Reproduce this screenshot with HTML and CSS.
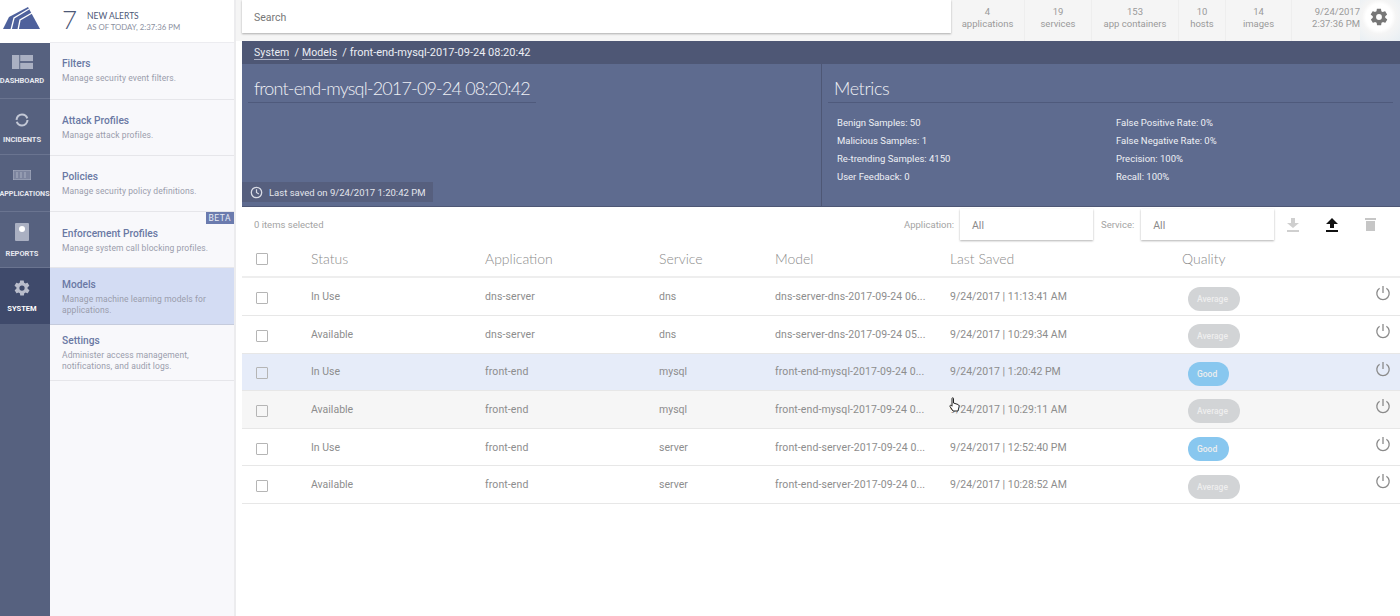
FILE: index.html
```html
<!DOCTYPE html>
<html lang="en">
<head>
    <meta charset="UTF-8">
    <title>Models</title>
    <link rel="stylesheet" href="styles.css">
</head>
<body>
    <div class="app">
        <aside class="rail">
            <div class="logo">
                <svg width="40" height="24" viewBox="0 0 40 24"><path d="M1 22 L7 10 L26 0 L38 22 Z" fill="#4e619c"/><path d="M9 23 L12 11 L27 2 M16 23 L18 13 L30 6" fill="none" stroke="#fff" stroke-width="1.3"/></svg>
            </div>
            <a class="rail-item rail-dash">
                <svg width="21" height="14" viewBox="0 0 23 16" preserveAspectRatio="none"><rect width="8" height="16" fill="#aab0c2"/><rect x="9" width="14" height="7" fill="#aab0c2"/><rect x="9" y="9" width="14" height="7" fill="#aab0c2"/></svg>
                <span>DASHBOARD</span>
            </a>
            <a class="rail-item rail-inc">
                <svg width="18" height="18" viewBox="0 0 18 18"><circle cx="9" cy="9" r="5.5" fill="none" stroke="#c3c8d6" stroke-width="2" stroke-dasharray="15 2"/></svg>
                <span>INCIDENTS</span>
            </a>
            <a class="rail-item rail-app">
                <svg width="18" height="10" viewBox="0 0 18 10"><path d="M0 0H18V10H0Z M4 2V8 M8 2V8 M12 2V8" fill="#7d859f" stroke="#aab0c2"/></svg>
                <span>APPLICATIONS</span>
            </a>
            <a class="rail-item rail-rep">
                <svg width="14" height="18" viewBox="0 0 14 18"><rect width="14" height="18" rx="1" fill="#aab0c2"/><circle cx="7" cy="6" r="3" fill="#fff"/></svg>
                <span>REPORTS</span>
            </a>
            <a class="rail-item rail-sys">
                <svg width="18" height="18" viewBox="0 0 24 24"><path fill="#b9bdcb" d="M19.4 13c0-.3.1-.6.1-1s0-.7-.1-1l2.1-1.6c.2-.2.2-.4.1-.6l-2-3.5c-.1-.2-.4-.3-.6-.2l-2.5 1c-.5-.4-1.1-.7-1.7-1l-.4-2.6c0-.3-.2-.5-.5-.5h-4c-.3 0-.5.2-.5.4l-.4 2.7c-.6.2-1.1.6-1.7 1l-2.5-1c-.2-.1-.5 0-.6.2l-2 3.5c-.1.2-.1.5.1.6L4.6 11c0 .3-.1.6-.1 1s0 .7.1 1l-2.1 1.6c-.2.2-.2.4-.1.6l2 3.5c.1.2.4.3.6.2l2.5-1c.5.4 1.1.7 1.7 1l.4 2.6c0 .3.2.5.5.5h4c.3 0 .5-.2.5-.4l.4-2.7c.6-.2 1.1-.6 1.7-1l2.5 1c.2.1.5 0 .6-.2l2-3.5c.1-.2.1-.5-.1-.6L19.4 13zM12 15.5a3.5 3.5 0 1 1 0-7 3.5 3.5 0 0 1 0 7z"/></svg>
                <span>SYSTEM</span>
            </a>
        </aside>

        <nav class="subnav">
            <div class="alerts">
                <span class="alerts-count">7</span>
                <div class="alerts-text">
                    <div class="alerts-title">NEW ALERTS</div>
                    <div class="alerts-time">AS OF TODAY, 2:37:36 PM</div>
                </div>
            </div>
            <a class="subnav-item h57"><b>Filters</b><p>Manage security event filters.</p></a>
            <a class="subnav-item h56"><b>Attack Profiles</b><p>Manage attack profiles.</p></a>
            <a class="subnav-item h56"><b>Policies</b><p>Manage security policy definitions.</p></a>
            <a class="subnav-item h56 has-beta"><span class="beta">BETA</span><b>Enforcement Profiles</b><p>Manage system call blocking profiles.</p></a>
            <a class="subnav-item h57 active"><b>Models</b><p>Manage machine learning models for applications.</p></a>
            <a class="subnav-item h56 tall"><b>Settings</b><p>Administer access management, notifications, and audit logs.</p></a>
        </nav>

        <main class="content">
            <header class="topbar">
                <div class="search">Search</div>
                <div class="stat w1"><span>4</span><span>applications</span></div>
                <div class="stat w2"><span>19</span><span>services</span></div>
                <div class="stat w3"><span>153</span><span>app containers</span></div>
                <div class="stat w4"><span>10</span><span>hosts</span></div>
                <div class="stat w5"><span>14</span><span>images</span></div>
                <div class="stat w6"><span>9/24/2017</span><span>2:37:36 PM</span></div>
                <div class="settings">
                    <svg width="20" height="20" viewBox="0 0 24 24"><path fill="#777" d="M19.4 13c0-.3.1-.6.1-1s0-.7-.1-1l2.1-1.6c.2-.2.2-.4.1-.6l-2-3.5c-.1-.2-.4-.3-.6-.2l-2.5 1c-.5-.4-1.1-.7-1.7-1l-.4-2.6c0-.3-.2-.5-.5-.5h-4c-.3 0-.5.2-.5.4l-.4 2.7c-.6.2-1.1.6-1.7 1l-2.5-1c-.2-.1-.5 0-.6.2l-2 3.5c-.1.2-.1.5.1.6L4.6 11c0 .3-.1.6-.1 1s0 .7.1 1l-2.1 1.6c-.2.2-.2.4-.1.6l2 3.5c.1.2.4.3.6.2l2.5-1c.5.4 1.1.7 1.7 1l.4 2.6c0 .3.2.5.5.5h4c.3 0 .5-.2.5-.4l.4-2.7c.6-.2 1.1-.6 1.7-1l2.5 1c.2.1.5 0 .6-.2l2-3.5c.1-.2.1-.5-.1-.6L19.4 13zM12 15.5a3.5 3.5 0 1 1 0-7 3.5 3.5 0 0 1 0 7z"/></svg>
                </div>
            </header>

            <div class="crumbs">
                <a>System</a><span class="sep">/</span><a>Models</a><span class="sep">/</span><span>front-end-mysql-2017-09-24 08:20:42</span>
            </div>

            <section class="hero">
                <div class="hero-left">
                    <h1>front-end-mysql-2017-09-24 08:20:42</h1>
                    <div class="saved">
                        <svg width="13" height="13" viewBox="0 0 14 14"><circle cx="7" cy="7" r="5.6" fill="none" stroke="#d8dbe5" stroke-width="1.4"/><path d="M7 3.5V7L9.5 8.5" fill="none" stroke="#d8dbe5" stroke-width="1.3"/></svg>
                        <span>Last saved on 9/24/2017 1:20:42 PM</span>
                    </div>
                </div>
                <div class="hero-right">
                    <h2>Metrics</h2>
                    <div class="metrics">
                        <div class="metric-col col-a">
                            <p>Benign Samples: 50</p>
                            <p>Malicious Samples: 1</p>
                            <p>Re-trending Samples: 4150</p>
                            <p>User Feedback: 0</p>
                        </div>
                        <div class="metric-col">
                            <p>False Positive Rate: 0%</p>
                            <p>False Negative Rate: 0%</p>
                            <p>Precision: 100%</p>
                            <p>Recall: 100%</p>
                        </div>
                    </div>
                </div>
            </section>

            <div class="toolbar">
                <span class="selected">0 items selected</span>
                <span class="filter-label">Application:</span>
                <div class="select sel-a">All</div>
                <span class="filter-label">Service:</span>
                <div class="select sel-b">All</div>
                <div class="actions">
                    <svg width="12" height="14" viewBox="0 0 12 14"><path d="M4 0H8V5H12L6 10L0 5H4Z M0 12H12V14H0Z" fill="#cfcfcf"/></svg>
                    <svg width="12" height="14" viewBox="0 0 12 14"><path d="M6 0L12 6H8V10H4V6H0Z M0 12H12V14H0Z" fill="#111"/></svg>
                    <svg width="11" height="13" viewBox="0 0 11 13"><path d="M0 0H11V2H0Z M1 3H10V13H1Z" fill="#c6c6c6"/></svg>
                </div>
            </div>

            <div class="table">
                <div class="row head">
                    <div class="c-check"><i class="box"></i></div>
                    <div class="c-status">Status</div>
                    <div class="c-app">Application</div>
                    <div class="c-svc">Service</div>
                    <div class="c-model">Model</div>
                    <div class="c-saved">Last Saved</div>
                    <div class="c-qual">Quality</div>
                </div>
                <div class="row">
                    <div class="c-check"><i class="box"></i></div>
                    <div class="c-status">In Use</div>
                    <div class="c-app">dns-server</div>
                    <div class="c-svc">dns</div>
                    <div class="c-model">dns-server-dns-2017-09-24 06...</div>
                    <div class="c-saved">9/24/2017 | 11:13:41 AM</div>
                    <div class="c-qual"><span class="pill average">Average</span></div>
                    <svg class="power" width="16" height="16" viewBox="0 0 16 16"><path d="M8 1V8 M4.6 3.2A6.2 6.2 0 1 0 11.4 3.2" fill="none" stroke="#8a8a8a" stroke-width="1.3"/></svg>
                </div>
                <div class="row">
                    <div class="c-check"><i class="box"></i></div>
                    <div class="c-status">Available</div>
                    <div class="c-app">dns-server</div>
                    <div class="c-svc">dns</div>
                    <div class="c-model">dns-server-dns-2017-09-24 05...</div>
                    <div class="c-saved">9/24/2017 | 10:29:34 AM</div>
                    <div class="c-qual"><span class="pill average">Average</span></div>
                    <svg class="power" width="16" height="16" viewBox="0 0 16 16"><path d="M8 1V8 M4.6 3.2A6.2 6.2 0 1 0 11.4 3.2" fill="none" stroke="#8a8a8a" stroke-width="1.3"/></svg>
                </div>
                <div class="row current">
                    <div class="c-check"><i class="box"></i></div>
                    <div class="c-status">In Use</div>
                    <div class="c-app">front-end</div>
                    <div class="c-svc">mysql</div>
                    <div class="c-model">front-end-mysql-2017-09-24 0...</div>
                    <div class="c-saved">9/24/2017 | 1:20:42 PM</div>
                    <div class="c-qual"><span class="pill good">Good</span></div>
                    <svg class="power" width="16" height="16" viewBox="0 0 16 16"><path d="M8 1V8 M4.6 3.2A6.2 6.2 0 1 0 11.4 3.2" fill="none" stroke="#8a8a8a" stroke-width="1.3"/></svg>
                </div>
                <div class="row hover">
                    <div class="c-check"><i class="box"></i></div>
                    <div class="c-status">Available</div>
                    <div class="c-app">front-end</div>
                    <div class="c-svc">mysql</div>
                    <div class="c-model">front-end-mysql-2017-09-24 0...</div>
                    <div class="c-saved">9/24/2017 | 10:29:11 AM</div>
                    <div class="c-qual"><span class="pill average">Average</span></div>
                    <svg class="power" width="16" height="16" viewBox="0 0 16 16"><path d="M8 1V8 M4.6 3.2A6.2 6.2 0 1 0 11.4 3.2" fill="none" stroke="#8a8a8a" stroke-width="1.3"/></svg>
                    <svg class="cursor" width="11" height="15" viewBox="0 0 11 15"><path d="M3 1.5C3 .5 4.5 .5 4.5 1.5V6L9 7.5C10 8 10.2 9 10 10L9 14H4L1 9.5C.6 8.5 1.6 7.8 2.4 8.5L3 9.2Z" fill="#fff" stroke="#222" stroke-width="1"/></svg>
                </div>
                <div class="row">
                    <div class="c-check"><i class="box"></i></div>
                    <div class="c-status">In Use</div>
                    <div class="c-app">front-end</div>
                    <div class="c-svc">server</div>
                    <div class="c-model">front-end-server-2017-09-24 0...</div>
                    <div class="c-saved">9/24/2017 | 12:52:40 PM</div>
                    <div class="c-qual"><span class="pill good">Good</span></div>
                    <svg class="power" width="16" height="16" viewBox="0 0 16 16"><path d="M8 1V8 M4.6 3.2A6.2 6.2 0 1 0 11.4 3.2" fill="none" stroke="#8a8a8a" stroke-width="1.3"/></svg>
                </div>
                <div class="row">
                    <div class="c-check"><i class="box"></i></div>
                    <div class="c-status">Available</div>
                    <div class="c-app">front-end</div>
                    <div class="c-svc">server</div>
                    <div class="c-model">front-end-server-2017-09-24 0...</div>
                    <div class="c-saved">9/24/2017 | 10:28:52 AM</div>
                    <div class="c-qual"><span class="pill average">Average</span></div>
                    <svg class="power" width="16" height="16" viewBox="0 0 16 16"><path d="M8 1V8 M4.6 3.2A6.2 6.2 0 1 0 11.4 3.2" fill="none" stroke="#8a8a8a" stroke-width="1.3"/></svg>
                </div>
            </div>
        </main>
    </div>
</body>
</html>
```

FILE: styles.css
```css
* {
    box-sizing: border-box;
}
body {
    margin: 0;
    height: 616px;
    overflow: hidden;
    background-color: #fff;
    font-family: Roboto, "Liberation Sans", sans-serif;
}
p {
    margin: 0;
}
.app {
    display: flex;
    height: 616px;
}

/* left icon rail */
.rail {
    width: 50px;
    flex-shrink: 0;
    background-color: #56617f;
    overflow: hidden;
}
.logo {
    height: 43px;
    background-color: #fff;
    padding: 7px 0 0 2px;
}
.rail-item {
    display: flex;
    flex-direction: column;
    align-items: center;
    height: 56px;
    padding: 12px 6px 0 0;
    border-bottom: 1px solid #6a7490;
    white-space: nowrap;
}
.rail-item span {
    font-size: 7.5px;
    font-weight: 700;
    color: #e6e8ef;
    margin-top: 6px;
}
.rail-dash { padding-top: 12px; }
.rail-dash span { margin-top: 7px; }
.rail-app { height: 57px; padding: 15px 1px 0 0; }
.rail-app svg { margin-right: 5px; }
.rail-app span { margin-top: 9px; font-size: 7.2px; }
.rail-rep { padding-top: 11px; }
.rail-rep span { margin-top: 8px; }
.rail-sys {
    background-color: #3f4a6b;
    border-bottom: none;
    padding-top: 11px;
}
.rail-sys span { color: #fff; margin-top: 7px; }

/* second level navigation */
.subnav {
    width: 186px;
    flex-shrink: 0;
    background-color: #f8f8fb;
    border-right: 2px solid #ececee;
}
.alerts {
    display: flex;
    align-items: center;
    height: 43px;
    padding-left: 12px;
    background-color: #fff;
    border-bottom: 1px solid #ececf0;
    font-family: Lato, "Liberation Sans", sans-serif;
}
.alerts-count {
    font-size: 26px;
    font-weight: 300;
    color: #4d5877;
    width: 25px;
    margin-top: -4px;
}
.alerts-title {
    font-size: 8.5px;
    color: #4d5877;
    margin-bottom: 1px;
}
.alerts-time {
    font-size: 7.8px;
    color: #8b90a0;
}
.subnav-item {
    display: block;
    position: relative;
    padding: 15px 12px 0;
    border-bottom: 1px solid #e6e6ea;
}
.h56 { height: 56px; }
.h57 { height: 57px; }
.subnav-item b {
    display: block;
    font-size: 10.2px;
    font-weight: 500;
    color: #6a78a4;
    margin-bottom: 4px;
}
.subnav-item p {
    font-size: 8.5px;
    letter-spacing: .1px;
    line-height: 11px;
    color: #9a9dac;
}
.subnav-item.active {
    background-color: #d3dcf3;
    padding-top: 11px;
    border-bottom-color: #c5cbdc;
}
.subnav-item.tall { padding-top: 10px; }
.subnav-item.has-beta { padding-top: 16px; }
.beta {
    position: absolute;
    top: 0;
    right: 0;
    background-color: #6b7bae;
    color: #e8ebf5;
    font-size: 8.5px;
    letter-spacing: .5px;
    padding: 1px 3px;
}

/* main area */
.content {
    flex: 1;
    min-width: 0;
    padding-left: 6px;
}
.topbar {
    display: flex;
    height: 41px;
    background-color: #f5f5f5;
    margin-left: -6px;
    padding-left: 6px;
}
.search {
    width: 709px;
    height: 33px;
    padding: 11px 12px 0;
    background-color: #fff;
    box-shadow: 0 1px 2px rgba(0,0,0,.3);
    font-size: 10.5px;
    color: #777;
}
.stat {
    display: flex;
    flex-direction: column;
    align-items: center;
    padding-top: 6px;
    border-right: 1px solid #eee;
    font-size: 9.5px;
    color: #9a9a9a;
    line-height: 12px;
    white-space: nowrap;
}
.w1 { width: 74px; }
.w2 { width: 67px; }
.w3 { width: 87px; }
.w4 { width: 47px; }
.w5 { width: 66px; }
.w6 { width: 68px; border-right: none; align-items: flex-end; }
.settings {
    flex: 1;
    padding: 7px 0 0 9px;
    background: radial-gradient(circle at 19px 17px, #fff 13px, #f5f5f5 17px, #dfeaf2 40px);
}
.crumbs {
    display: flex;
    align-items: center;
    height: 23px;
    padding-left: 12px;
    background-color: #4e5775;
    color: #eceef4;
    font-size: 11px;
}
.crumbs a {
    font-size: 10.5px;
    letter-spacing: .1px;
    border-bottom: 1px solid #aab0c4;
}
.crumbs .sep {
    margin: 0 3px 0 5px;
}
.hero {
    display: flex;
    height: 143px;
    background-color: #5e6b8f;
    border-bottom: 1px solid #4e5775;
}
.hero-left {
    width: 580px;
    position: relative;
    border-right: 1px solid #4e5775;
    padding: 13px 0 0 6px;
}
.hero-left h1 {
    margin: 0;
    font-family: Lato, "Liberation Sans", sans-serif;
    font-size: 18px;
    font-weight: 300;
    line-height: 22px;
    letter-spacing: -.83px;
    color: #eef0f5;
    padding: 0 0 3px 6px;
    border-bottom: 1px solid #4f5a7c;
    width: 288px;
    white-space: nowrap;
}
.saved {
    position: absolute;
    left: 0;
    bottom: 4px;
    display: flex;
    align-items: center;
    gap: 6px;
    height: 20px;
    padding: 0 8px;
    background-color: #565f7e;
    font-size: 9.5px;
    color: #e3e5ec;
}
.hero-right {
    flex: 1;
    padding: 13px 7px 0 6px;
}
.hero-right h2 {
    margin: 0 0 14px;
    font-family: Lato, "Liberation Sans", sans-serif;
    font-size: 18px;
    font-weight: 300;
    line-height: 22px;
    letter-spacing: -.4px;
    color: #eef0f5;
    padding: 0 0 3px 6px;
    border-bottom: 1px solid #4f5a7c;
}
.metrics {
    display: flex;
    padding-left: 9px;
}
.col-a {
    width: 279px;
}
.metric-col p {
    font-size: 9.5px;
    color: #eef0f5;
    height: 18px;
    line-height: 12px;
}

/* filter bar and table */
.toolbar {
    display: flex;
    align-items: center;
    height: 35px;
    padding-left: 12px;
    font-size: 9.5px;
    color: #a3a3a3;
}
.selected {
    width: 650px;
    margin-top: -1px;
}
.filter-label {
    margin-right: 6px;
}
.select {
    height: 31px;
    padding: 10px 12px 0;
    background-color: #fff;
    box-shadow: 0 1px 2px rgba(0,0,0,.3);
    font-size: 10.5px;
    color: #8a8a8a;
}
.sel-a { width: 133px; margin-right: 8px; }
.sel-b { width: 133px; margin-left: 1px; }
.actions {
    display: flex;
    gap: 27px;
    margin-left: 13px;
    align-items: center;
}
.row {
    display: flex;
    align-items: center;
    position: relative;
    height: 37.6px;
    border-bottom: 1px solid #e7e7e7;
    font-size: 10.5px;
    color: #8d8d8d;
}
.row.head {
    height: 36.4px;
    padding-bottom: 2px;
    border-bottom-width: 2px;
    border-bottom-color: #eee;
    font-family: Lato, "Liberation Sans", sans-serif;
    font-size: 14px;
    font-weight: 300;
    color: #8b8b8b;
}
.row.current { background-color: #e6ecf9; }
.row.hover { background-color: #f6f6f6; }
.c-check { width: 69px; padding-left: 14px; }
.c-status { width: 174px; }
.c-app { width: 174px; letter-spacing: .1px; }
.c-svc { width: 116px; }
.c-model { width: 175px; white-space: nowrap; letter-spacing: .1px; }
.c-saved { width: 232px; }
.c-qual { flex: 1; }
.head .c-app, .head .c-model { letter-spacing: 0; }
.box {
    display: block;
    width: 12px;
    height: 12px;
    margin-top: 3px;
    border: 1px solid #b5b5b5;
    border-radius: 1px;
}
.head .box { margin-top: 2px; }
.pill {
    display: inline-block;
    height: 24px;
    line-height: 24px;
    margin: 4px 0 0 6px;
    padding: 0 9px;
    border-radius: 12px;
    font-size: 8.5px;
    font-weight: 500;
    color: #eee;
}
.pill.average { background-color: #d2d4d6; width: 52px; }
.pill.good { background-color: #88c7ef; width: 41px; }
.power {
    position: absolute;
    right: 9px;
    top: 7px;
}
.cursor {
    position: absolute;
    left: 707px;
    top: 6px;
}
```
